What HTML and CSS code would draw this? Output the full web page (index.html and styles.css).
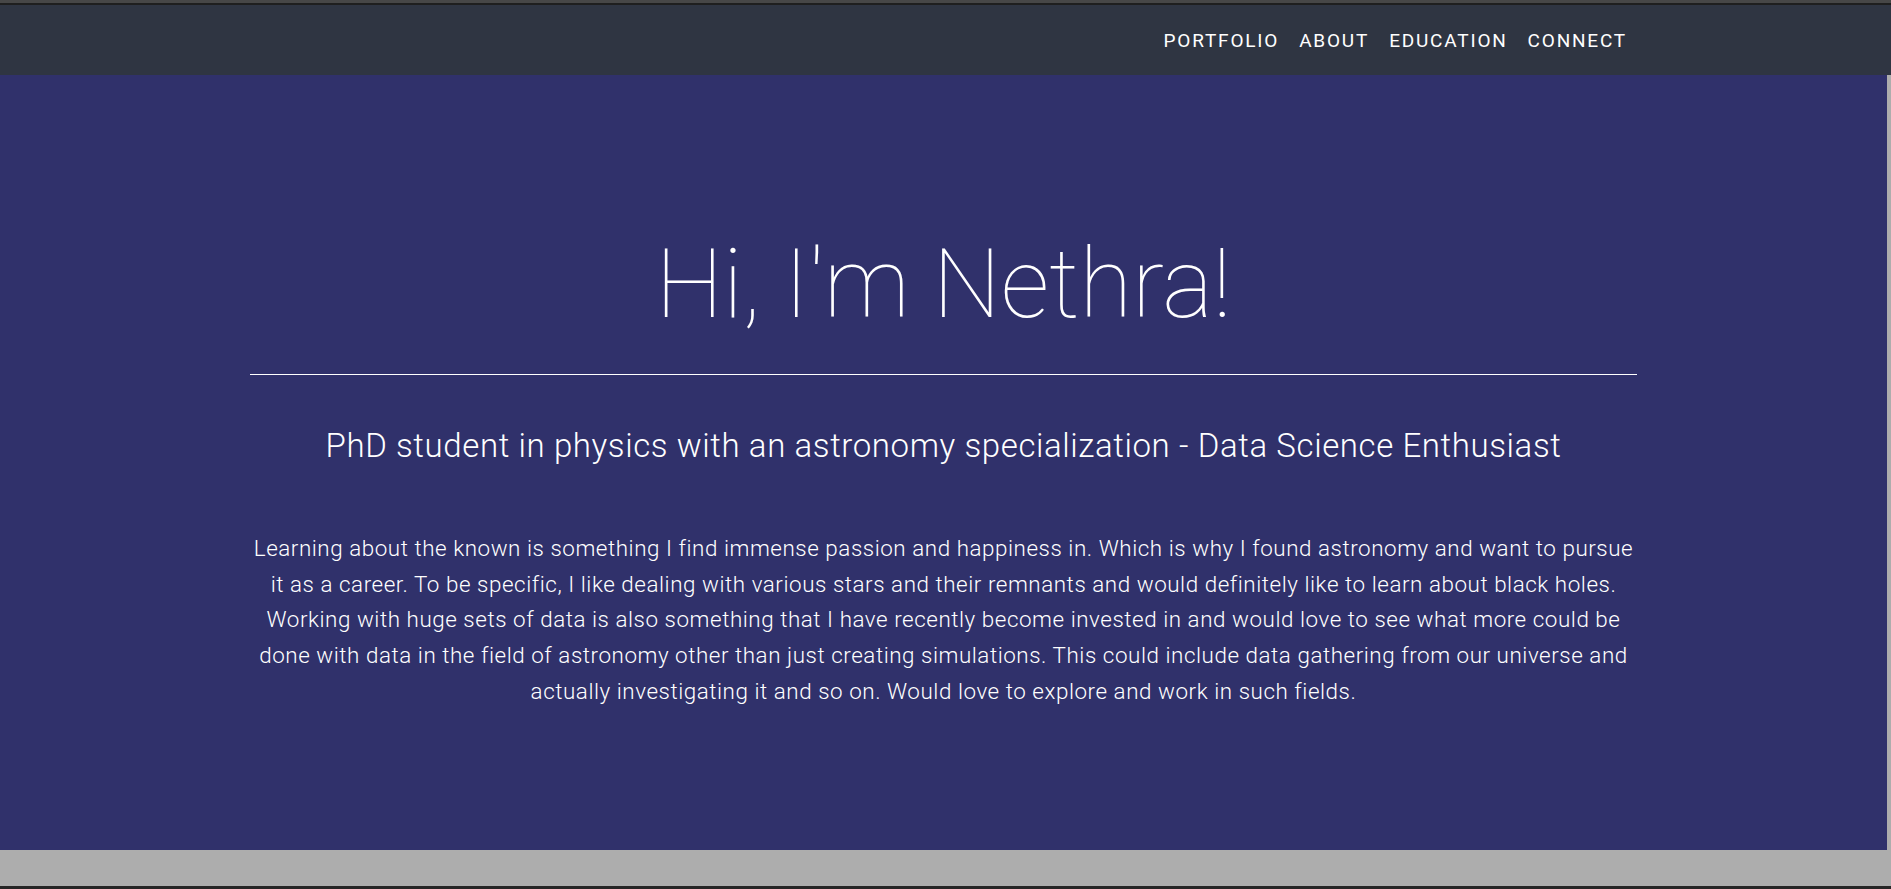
FILE: index.html
```html
<!DOCTYPE html>
<html lang="en">
<head>
<meta charset="utf-8">
<title>Nethra</title>
<link rel="stylesheet" href="styles.css">
</head>
<body>
<div class="chrome-top"></div>
<header class="navbar">
  <div class="container nav-inner">
    <nav class="nav-links">
      <a href="#portfolio">Portfolio</a>
      <a href="#about">About</a>
      <a href="#education">Education</a>
      <a href="#connect">Connect</a>
    </nav>
  </div>
</header>
<div class="viewport">
  <main class="hero">
    <div class="container hero-inner">
      <h1 class="hero-title">Hi, I'm Nethra!</h1>
      <hr class="hero-rule">
      <h2 class="hero-sub">PhD student in physics with an astronomy specialization - Data Science Enthusiast</h2>
      <p class="hero-text">Learning about the known is something I find immense passion and happiness in. Which is why I found astronomy and want to pursue it as a career. To be specific, I like dealing with various stars and their remnants and would definitely like to learn about black holes. Working with huge sets of data is also something that I have recently become invested in and would love to see what more could be done with data in the field of astronomy other than just creating simulations. This could include data gathering from our universe and actually investigating it and so on. Would love to explore and work in such fields.</p>
    </div>
  </main>
  <div class="scrollbar"></div>
</div>
<div class="chrome-bottom"></div>
<div class="chrome-edge"></div>
</body>
</html>
```
FILE: styles.css
```css
html, body {
  margin: 0;
  padding: 0;
  height: 100%;
  overflow: hidden;
}
body {
  background: #adadad;
  font-family: Roboto, "Liberation Sans", sans-serif;
  color: #ffffff;
  display: flex;
  flex-direction: column;
}
.chrome-top {
  height: 3px;
  background: #474747;
  border-bottom: 2px solid #1f1f1f;
  flex: none;
}
.navbar {
  height: 70px;
  background: #2f3542;
  flex: none;
  display: flex;
  align-items: center;
  padding-right: 4px;
}
.container {
  width: 1387px;
  margin: 0 auto;
}
.nav-inner {
  display: flex;
  justify-content: flex-end;
}
.nav-links {
  display: flex;
}
.nav-links a {
  color: #ffffff;
  text-decoration: none;
  text-transform: uppercase;
  font-size: 19px;
  font-weight: 400;
  letter-spacing: 1.8px;
  padding: 0 10px;
}
.viewport {
  display: flex;
  height: 775px;
  flex: none;
}
.hero {
  flex: 1;
  background: #30316b;
  padding-top: 152px;
  text-align: center;
}
.scrollbar {
  width: 4px;
  background: #adadad;
}
.hero-title {
  margin: 0;
  font-size: 96px;
  font-weight: 100;
  line-height: 1.2;
}
.hero-rule {
  margin: 32px 0 0;
  border: 0;
  border-top: 1px solid #ffffff;
  height: 0;
}
.hero-sub {
  margin: 51px 0 0;
  font-size: 33px;
  font-weight: 300;
  letter-spacing: 0.6px;
  line-height: 1.2;
}
.hero-text {
  margin: 65px 0 0;
  font-size: 22.4px;
  font-weight: 300;
  letter-spacing: 0.55px;
  line-height: 1.6;
}
.chrome-bottom {
  height: 36px;
  background: #adadad;
  flex: none;
}
.chrome-edge {
  flex: 1;
  background: #262626;
}
```
